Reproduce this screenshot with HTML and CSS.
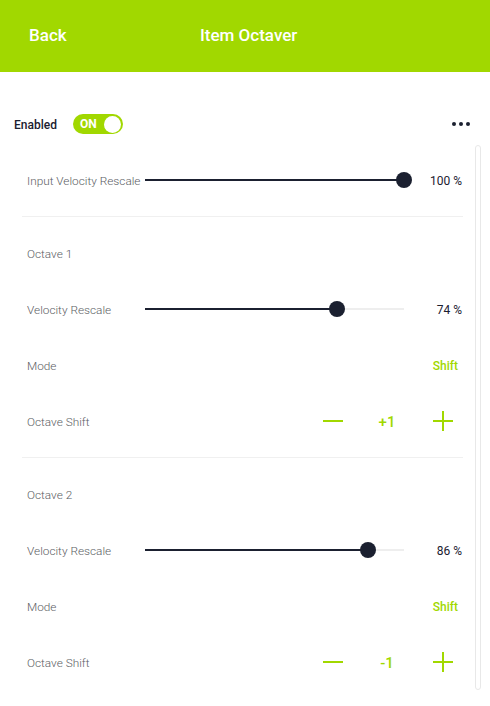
FILE: index.html
```html
<!DOCTYPE html>
<html lang="en">
<head>
<meta charset="utf-8">
<title>Item Octaver</title>
<link rel="stylesheet" href="styles.css">
</head>
<body>
<header class="appbar">
  <span class="back">Back</span>
  <span class="title">Item Octaver</span>
  <span></span>
</header>

<div class="toolbar">
  <span class="enabled-label">Enabled</span>
  <span class="toggle"><span class="toggle-text">ON</span><span class="knob"></span></span>
  <span class="more"><i></i><i></i><i></i></span>
</div>

<div class="scroller">
  <div class="list">
    <div class="row">
      <span class="label">Input Velocity Rescale</span>
      <div class="slider"><div class="fill" style="width:100%"></div><div class="thumb" style="left:100%"></div></div>
      <span class="value">100 %</span>
    </div>
    <div class="divider"></div>

    <div class="row"><span class="label">Octave 1</span></div>
    <div class="row">
      <span class="label">Velocity Rescale</span>
      <div class="slider"><div class="fill" style="width:74%"></div><div class="thumb" style="left:74%"></div></div>
      <span class="value">74 %</span>
    </div>
    <div class="row">
      <span class="label">Mode</span>
      <span class="mode">Shift</span>
    </div>
    <div class="row">
      <span class="label">Octave Shift</span>
      <div class="stepper">
        <span class="minus"></span>
        <span class="step-value">+1</span>
        <span class="plus"></span>
      </div>
    </div>
    <div class="divider"></div>

    <div class="row"><span class="label">Octave 2</span></div>
    <div class="row">
      <span class="label">Velocity Rescale</span>
      <div class="slider"><div class="fill" style="width:86%"></div><div class="thumb" style="left:86%"></div></div>
      <span class="value">86 %</span>
    </div>
    <div class="row">
      <span class="label">Mode</span>
      <span class="mode">Shift</span>
    </div>
    <div class="row">
      <span class="label">Octave Shift</span>
      <div class="stepper">
        <span class="minus"></span>
        <span class="step-value">-1</span>
        <span class="plus"></span>
      </div>
    </div>
  </div>
  <div class="scrollbar"></div>
</div>
</body>
</html>
```

FILE: styles.css
```css
* { box-sizing: border-box; }
html, body { margin: 0; padding: 0; }
body {
  width: 490px;
  height: 706px;
  overflow: hidden;
  background: #ffffff;
  font-family: Roboto, "Liberation Sans", sans-serif;
  color: #1b2030;
}

.appbar {
  height: 72px;
  background: #a1d800;
  color: #ffffff;
  display: grid;
  grid-template-columns: 200px auto 1fr;
  align-items: center;
  padding-bottom: 2px;
  font-size: 17px;
  font-weight: 500;
}
.back { padding-left: 29px; }

.toolbar {
  margin-top: 31px;
  height: 42px;
  display: flex;
  align-items: center;
  padding-left: 14px;
  padding-right: 20px;
}
.enabled-label {
  font-size: 12px;
  font-weight: 500;
  color: #1b2030;
  padding-top: 1px;
}
.toggle {
  margin-left: 16px;
  width: 50px;
  height: 20px;
  border-radius: 10px;
  background: #a1d800;
  display: flex;
  align-items: center;
  justify-content: space-between;
  padding: 0 2px 0 7px;
}
.toggle-text {
  color: #fff;
  font-size: 12px;
  font-weight: 700;
}
.knob {
  width: 17px;
  height: 17px;
  border-radius: 50%;
  background: #fff;
}
.more {
  margin-left: auto;
  display: flex;
  gap: 3px;
}
.more i {
  width: 4px;
  height: 4px;
  border-radius: 50%;
  background: #1b2030;
}

.scroller {
  display: flex;
  align-items: flex-start;
  height: 561px;
  overflow: hidden;
}
.list {
  margin-left: 22px;
  width: 441px;
  padding-top: 7px;
}
.scrollbar {
  margin-left: 12px;
  width: 6px;
  height: 545px;
  border: 1px solid #e8e8e8;
  border-radius: 3px;
  flex: none;
}

.row {
  height: 56px;
  display: grid;
  grid-template-columns: 118px 259px 1fr;
  align-items: center;
  padding-left: 5px;
  padding-right: 1px;
}
.label {
  font-size: 11.8px;
  font-weight: 300;
  color: #5a5d63;
  white-space: nowrap;
  padding-top: 2px;
}
.slider {
  position: relative;
  height: 2px;
  background: #eeeeee;
}
.fill {
  height: 2px;
  background: #1b2030;
}
.thumb {
  position: absolute;
  top: 50%;
  width: 16px;
  height: 16px;
  margin: -8px 0 0 -8px;
  border-radius: 50%;
  background: #1b2030;
}
.value {
  text-align: right;
  font-size: 12px;
  color: #1b2030;
  padding-top: 2px;
}
.mode {
  grid-column: 2 / 4;
  justify-self: end;
  margin-right: 4px;
  padding-top: 2px;
  font-size: 12px;
  font-weight: 500;
  color: #a1d800;
}
.stepper {
  grid-column: 2 / 4;
  justify-self: end;
  margin-right: 9px;
  display: flex;
  align-items: center;
}
.minus, .plus {
  position: relative;
  width: 20px;
  height: 20px;
}
.minus::before, .plus::before, .plus::after {
  content: "";
  position: absolute;
  background: #a1d800;
}
.minus::before, .plus::before {
  left: 0;
  right: 0;
  top: 9px;
  height: 2px;
}
.plus::after {
  top: 0;
  bottom: 0;
  left: 9px;
  width: 2px;
}
.step-value {
  width: 44px;
  margin: 0 24px 0 22px;
  text-align: center;
  font-size: 15px;
  font-weight: 500;
  color: #a1d800;
  padding-top: 1px;
}
.divider {
  height: 1px;
  background: #f0f0f0;
  margin: 8px 0;
}
```
